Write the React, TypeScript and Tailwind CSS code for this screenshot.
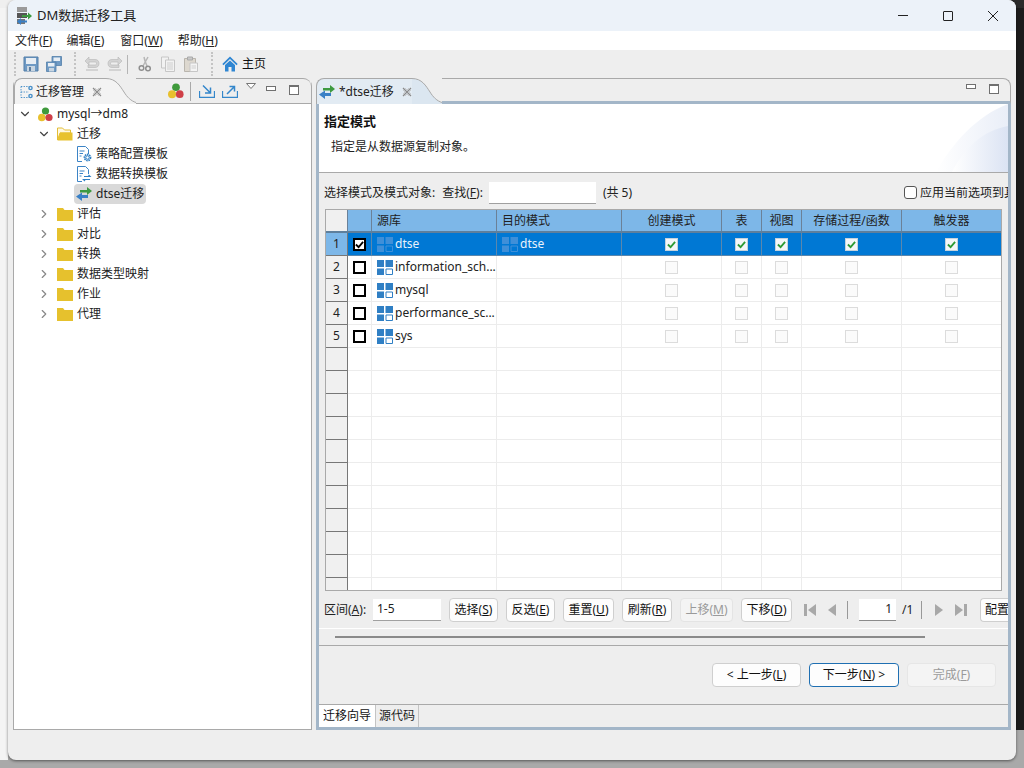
import React from 'react'
import { ChevronDown, ChevronRight } from 'lucide-react'

const FONT = 'font-["Noto_Sans","Noto_Sans_CJK_SC",sans-serif]'

function Floppy({ className = '' }: { className?: string }) {
  return (
    <svg viewBox="0 0 16 16" className={className}>
      <path d="M1 1h14v14H1z" fill="#6f9ac4" stroke="#527fa9" />
      <path d="M3 2h10v6H3z" fill="#e8eef4" />
      <path d="M4 10h8v5H4z" fill="#c9d6e2" />
      <path d="M6 11h2v4H6z" fill="#5b7d9f" />
    </svg>
  )
}

function SaveAll() {
  return (
    <svg viewBox="0 0 16 16" className="w-4 h-4">
      <path d="M6 .5h9.500v9H6z" fill="#6f9ac4" stroke="#527fa9" strokeWidth="0.8" />
      <path d="M7.500 1.500h6.500v3.500H7.500z" fill="#e8eef4" />
      <path d="M.5 6h9.500v9.500H.5z" fill="#6f9ac4" stroke="#527fa9" strokeWidth="0.8" />
      <path d="M2 7h6.500v3.500H2z" fill="#e8eef4" />
      <path d="M3 12h5v3.500H3z" fill="#c9d6e2" />
    </svg>
  )
}

function Undo({ flip = false }: { flip?: boolean }) {
  return (
    <svg viewBox="0 0 16 16" className={flip ? 'w-4 h-4 -scale-x-100' : 'w-4 h-4'}>
      <path d="M1 5l4-4v2.500h6c2.500 0 4 1.500 4 4s-1.500 4-4 4H4V9h7c1 0 1.500-.5 1.500-1.500S12 6 11 6H5v3z" fill="#d3d3d3" stroke="#b5b5b5" strokeWidth="0.6" />
      <path d="M2 13h12v2H2z" fill="#d3d3d3" />
    </svg>
  )
}

function Cut() {
  return (
    <svg viewBox="0 0 16 16" className="w-4 h-4">
      <path d="M11 1L6 10M7 1l1 4 2 5" fill="none" stroke="#b7b7b7" strokeWidth="1.500" />
      <circle cx="4.500" cy="12" r="2.300" fill="none" stroke="#8f8f8f" strokeWidth="1.500" />
      <circle cx="11" cy="12.500" r="2.300" fill="none" stroke="#8f8f8f" strokeWidth="1.500" />
    </svg>
  )
}

function Copy() {
  return (
    <svg viewBox="0 0 16 16" className="w-4 h-4">
      <path d="M1.500 1h7v11h-7z" fill="#f2f2f2" stroke="#c6c6c6" />
      <path d="M5.500 4h9v11.500h-9z" fill="#f2f2f2" stroke="#c6c6c6" />
      <path d="M7 7h6M7 9h6M7 11h6M7 13h6" stroke="#cfcfcf" />
    </svg>
  )
}

function Paste() {
  return (
    <svg viewBox="0 0 16 16" className="w-4 h-4">
      <path d="M1.500 2.500h11v13h-11z" fill="#ddd8cf" stroke="#b9b5ad" />
      <path d="M4.500 1h5v3h-5z" fill="#c9c9c9" stroke="#a9a9a9" />
      <path d="M7 7h7.500v8.500H7z" fill="#f4f4f4" stroke="#c6c6c6" />
      <path d="M8.500 10h4.500M8.500 12h4.500" stroke="#cfcfcf" />
    </svg>
  )
}

function Home() {
  return (
    <svg viewBox="0 0 16 16" className="w-4 h-4">
      <path d="M8 .5L.3 8l1.200 1.200L8 3l6.500 6.200L15.700 8z" fill="#2f86d2" />
      <path d="M3 9l5-4.600L13 9v6.500H9.500V11h-3v4.500H3z" fill="#2f86d2" />
    </svg>
  )
}

function Cluster({ size = 'w-[15px] h-[15px]' }: { size?: string }) {
  return (
    <svg viewBox="0 0 15 15" className={size}>
      <circle cx="7.500" cy="4" r="3.600" fill="#3f9a3c" />
      <circle cx="3.800" cy="10.500" r="3.800" fill="#e8c02e" />
      <circle cx="11" cy="10.500" r="3.600" fill="#cf3f47" />
    </svg>
  )
}

function Folder({ open = false }: { open?: boolean }) {
  if (open) {
    return (
      <svg viewBox="0 0 16 14" className="w-4 h-[14px]">
        <path d="M.5 13V1h5l2 2h6v3H3L.5 13z" fill="#fff8e0" stroke="#e3bd35" />
        <path d="M.5 13.500L3 5.500h12.500V13.500z" fill="#e8c22e" />
      </svg>
    )
  }
  return (
    <svg viewBox="0 0 16 14" className="w-4 h-[14px]">
      <path d="M0 1h6l1.500 2H16v11H0z" fill="#e6c12d" />
    </svg>
  )
}

function DocGear({ kind }: { kind: 'gear' | 'swap' }) {
  return (
    <svg viewBox="0 0 16 16" className="w-4 h-4">
      <path d="M1.500.5h8l3 3V8M6 15.500H1.500V.5" fill="none" stroke="#3c84c6" />
      <path d="M3.500 5h5M3.500 7.500h3.500M3.500 10h2" stroke="#3c84c6" />
      {kind === 'gear' ? (
        <g>
          <circle cx="11.500" cy="11.500" r="3" fill="none" stroke="#2f7fc4" strokeWidth="1.800" strokeDasharray="1.500 0.700" />
          <circle cx="11.500" cy="11.500" r="1.700" fill="none" stroke="#2f7fc4" />
        </g>
      ) : (
        <path d="M8 10.500h6l-1.500-1.500M14 13.500H7.500L9 15" fill="none" stroke="#2f7fc4" strokeWidth="1.200" />
      )}
    </svg>
  )
}

function Swap() {
  return (
    <svg viewBox="0 0 16 14" className="w-4 h-[14px] shrink-0">
      <path d="M4 3h7V0l5 4-5 4V5.500H4z" fill="#3d9a41" />
      <path d="M12 8H6V5.500L0 9.500l6 4.500v-3h6z" fill="#3a80c6" />
    </svg>
  )
}

function ViewDots() {
  return (
    <svg viewBox="0 0 14 14" className="w-[14px] h-[14px] shrink-0">
      <path d="M1 1.500h8M1 1.500v11M1 12.500h8M1 7h8" fill="none" stroke="#4a90c8" strokeDasharray="1.300 1.300" />
      <circle cx="10.500" cy="3" r="2.300" fill="#4a90c8" />
      <circle cx="10.500" cy="11" r="2.300" fill="#4a90c8" />
      <path d="M9.500 3h2M10.500 2v2M9.500 11h2M10.500 10v2" stroke="#fff" strokeWidth="0.700" />
    </svg>
  )
}

function CloseX() {
  return (
    <svg viewBox="0 0 10 10" className="w-[10px] h-[10px] shrink-0">
      <path d="M1 1l8 8M9 1l-8 8" stroke="#8a8a8a" strokeWidth="1.200" />
      <path d="M3 1l2 2 2-2M3 9l2-2 2 2M1 3l2 2-2 2M9 3L7 5l2 2" fill="none" stroke="#bdbdbd" strokeWidth="0.700" />
    </svg>
  )
}

function ImportIcon({ out = false }: { out?: boolean }) {
  return (
    <svg viewBox="0 0 16 14" className="w-4 h-[14px]">
      <path d="M.5 7v6.500h15V7" fill="none" stroke="#3487cb" strokeWidth="1.300" />
      {out ? (
        <path d="M5 10l7-7M7.500 2.500H12.500V7.500" fill="none" stroke="#3487cb" strokeWidth="1.500" />
      ) : (
        <path d="M4 1.500l7 7M11.500 3.500v5.500H6" fill="none" stroke="#3487cb" strokeWidth="1.500" />
      )}
    </svg>
  )
}

function MinMax() {
  return (
    <div className="flex items-center gap-[13px]">
      <div className="w-[10px] h-[5px] border border-[#707070] bg-white mb-[4px]" />
      <div className="w-[10px] h-[10px] border border-[#707070] border-t-[2px] bg-white" />
    </div>
  )
}

function SchemaIcon({ dim = false }: { dim?: boolean }) {
  const c = dim ? '#3f8fd8' : '#2f7fc4'
  return (
    <svg viewBox="0 0 16 15" className="w-4 h-[15px] shrink-0">
      <path d="M0 0h7v7H0zM8.500 0H16v7H8.500zM0 8.500h7V15H0z" fill={c} />
      <path d="M9 9h6.500v5.500H9z" fill="none" stroke={c} />
    </svg>
  )
}

function Grip() {
  return <div className="w-[2px] h-[24px] mx-[2px] border-l-2 border-dotted border-[#c4c4c4]" />
}

function Sep() {
  return <div className="w-px h-[19px] bg-[#b5b5b5] mx-1" />
}

function Check({ on, black }: { on: boolean; black?: boolean }) {
  if (black) {
    return (
      <div className="w-[13px] h-[13px] border-2 border-black bg-white flex items-center justify-center">
        {on && (
          <svg viewBox="0 0 10 10" className="w-[9px] h-[9px]">
            <path d="M1 5l3 3 5-6" fill="none" stroke="#000" strokeWidth="2" />
          </svg>
        )}
      </div>
    )
  }
  return (
    <div className={on ? 'w-[13px] h-[13px] border border-[#c5d2dc] bg-[#f4f6f8] flex items-center justify-center' : 'w-[13px] h-[13px] border border-[#dcdcdc] bg-[#fbfbfb]'}>
      {on && (
        <svg viewBox="0 0 10 10" className="w-[9px] h-[9px]">
          <path d="M1 5l3 3 5-6" fill="none" stroke="#2e9a36" strokeWidth="2" />
        </svg>
      )}
    </div>
  )
}

function TreeRow({ indent, arrow, icon, label, selected }: { indent: string; arrow?: 'open' | 'closed'; icon: React.ReactNode; label: string; selected?: boolean }) {
  return (
    <div className={`h-5 flex items-center ${indent}`}>
      <div className="w-[18px] flex items-center">
        {arrow === 'open' && <ChevronDown size={14} className="text-[#444]" />}
        {arrow === 'closed' && <ChevronRight size={14} className="text-[#888]" />}
      </div>
      <div className={selected ? 'flex items-center h-5 bg-[#d9d9d9] rounded-sm px-[2px] gap-[3px]' : 'flex items-center gap-[3px] px-[2px]'}>
        {icon}
        <span className="ml-[1px] text-[#222]">{label}</span>
      </div>
    </div>
  )
}

function Btn({ children, w, disabled }: { children: React.ReactNode; w: string; disabled?: boolean }) {
  return (
    <div className={`${w} h-6 shrink-0 rounded-[4px] border flex items-center justify-center ${disabled ? 'border-[#e4e4e4] bg-[#f4f4f4] text-[#9a9a9a]' : 'border-[#cfcfcf] bg-[#fdfdfd] text-[#111]'}`}>
      {children}
    </div>
  )
}

function Key({ c }: { c: string }) {
  return <span className="underline">{c}</span>
}

const colW = ['w-[22px]', 'w-[24px]', 'w-[125px]', 'w-[125px]', 'w-[100px]', 'w-[40px]', 'w-[40px]', 'w-[100px]', 'w-[100px]']
const headers = ['', '', '源库', '目的模式', '创建模式', '表', '视图', '存储过程/函数', '触发器']
const schemas = ['dtse', 'information_sch...', 'mysql', 'performance_sc...', 'sys']
const emptyRows = Array.from({ length: 11 }, (_, i) => i)

function Row({ n }: { n: number }) {
  const sel = n === 0
  const name = schemas[n]
  const cell = sel ? 'border-r border-b border-[#5b87ad]' : 'border-r border-b border-[#ececec]'
  return (
    <div className={`flex h-[23px] ${sel ? 'bg-[#0078d4] text-[#e8f2fb]' : 'bg-white text-[#222]'}`}>
      <div className={`${colW[0]} shrink-0 flex items-center justify-center border-r border-b border-[#777] ${sel ? 'bg-[#7db7e8] text-[#222]' : 'bg-[#f0f0f0] text-[#222]'}`}>
        {name ? n + 1 : ''}
      </div>
      <div className={`${colW[1]} shrink-0 flex items-center justify-center ${cell}`}>
        {name && <Check on={sel} black />}
      </div>
      <div className={`${colW[2]} shrink-0 flex items-center gap-[1px] pl-[5px] overflow-hidden whitespace-nowrap ${cell}`}>
        {name && <SchemaIcon dim={sel} />}
        <span className="ml-[1px]">{name}</span>
      </div>
      <div className={`${colW[3]} shrink-0 flex items-center gap-[1px] pl-[5px] ${cell}`}>
        {sel && <SchemaIcon dim />}
        {sel && <span className="ml-[1px]">dtse</span>}
      </div>
      {[4, 5, 6, 7, 8].map((c) => (
        <div key={c} className={`${colW[c]} shrink-0 flex items-center justify-center ${cell}`}>
          {name && <Check on={sel} />}
        </div>
      ))}
      <div className="flex-1 bg-white border-b border-[#ececec]" />
    </div>
  )
}

export default function App() {
  return (
    <div className={`${FONT} relative w-[1024px] h-[768px] overflow-hidden text-[12px] leading-none bg-[#a9a9a9]`}>
      <div className="absolute left-0 top-0 w-[8px] h-[760px] bg-[#f4f4f4]" />
      <div className="absolute right-0 top-0 w-[8px] h-[730px] bg-[#1c1c1c]" />
      <div className="absolute left-[340px] right-0 top-0 h-[8px] bg-[#2a2a2a]" />
      <div className="absolute left-0 right-[340px] top-0 h-[8px] bg-[#efefef]" />

      <div className="absolute left-[8px] top-0 w-[1008px] h-[760px] rounded-lg bg-[#eeeeee] flex flex-col overflow-hidden shadow-[0_1px_3px_rgba(0,0,0,0.5)]">
        {/* title bar */}
        <div className="h-[31px] shrink-0 bg-[#ecf2f9] flex items-center pl-[8px]">
          <svg viewBox="0 0 16 18" className="w-4 h-[18px]">
            <path d="M1 0h10v5H1z" fill="#9a9a9a" />
            <path d="M1 6h10v5H1z" fill="#555" />
            <path d="M1 12h8v5H1z" fill="#777" />
            <path d="M6 8h6V5.500l4 3.500-4 3.500V10H6z" fill="#3d9a41" />
            <path d="M11 15.500H5V18l-4-3.500L5 11v2.500h6z" fill="#3a80c6" />
          </svg>
          <span className="ml-[5px] text-[13px] text-[#222]">DM数据迁移工具</span>
          <div className="ml-auto flex items-center gap-[35px] pr-[18px]">
            <div className="w-[10px] h-px bg-[#222]" />
            <div className="w-[10px] h-[10px] border border-[#222] rounded-[1px]" />
            <svg viewBox="0 0 10 10" className="w-[10px] h-[10px]">
              <path d="M0 0l10 10M10 0L0 10" stroke="#222" />
            </svg>
          </div>
        </div>

        {/* menu */}
        <div className="h-[19px] shrink-0 bg-white flex items-center pl-[7px] gap-[14px] text-[#222]">
          <span>文件(<Key c="F" />)</span>
          <span>编辑(<Key c="E" />)</span>
          <span className="ml-[2px]">窗口(<Key c="W" />)</span>
          <span className="ml-[1px]">帮助(<Key c="H" />)</span>
        </div>

        {/* toolbar */}
        <div className="h-[28px] shrink-0 flex items-center pl-[4px]">
          <Grip />
          <div className="flex items-center gap-[7px] ml-[5px]">
            <Floppy className="w-4 h-4" />
            <SaveAll />
          </div>
          <div className="ml-[10px]"><Grip /></div>
          <div className="flex items-center gap-[7px] ml-[6px]">
            <Undo />
            <Undo flip />
          </div>
          <Sep />
          <div className="flex items-center gap-[7px] ml-[5px]">
            <Cut />
            <Copy />
            <Paste />
          </div>
          <div className="ml-[10px]"><Grip /></div>
          <div className="ml-[7px] flex items-center gap-[4px] text-[#111]">
            <Home />
            <span>主页</span>
          </div>
        </div>

        {/* panels */}
        <div className="flex-1 min-h-0 flex gap-[4px] pl-[5px] pr-[5px]">
          {/* left */}
          <div className="w-[299px] flex flex-col border border-[#a9a9a9] rounded-t-lg border-t-0 bg-white">
            <div className="relative h-[26px] shrink-0 flex items-center bg-[#eeeeee]">
              <div className="relative flex items-center h-[26px] w-[92px] pl-[5px] gap-[2px] bg-[#f3f3f3] rounded-tl-lg border-t border-l border-[#a9a9a9] text-[#222] whitespace-nowrap">
                <ViewDots />
                <span>迁移管理</span>
                <span className="ml-[6px]"><CloseX /></span>
              </div>
              <svg viewBox="0 0 30 26" className="w-[30px] h-[26px] shrink-0" preserveAspectRatio="none">
                <path d="M0 .5C10 .5 14 8 18 14c3 5 7 9 12 10.500V26H0z" fill="#f3f3f3" />
                <path d="M0 .5C10 .5 14 8 18 14c3 5 7 9 12 10.500" fill="none" stroke="#a9a9a9" />
              </svg>
              <div className="flex-1 h-[26px] border-t border-b border-[#a9a9a9] rounded-tr-lg flex items-center justify-end pr-[12px]">
                <Cluster size="w-[16px] h-[16px]" />
                <div className="w-px h-[19px] bg-[#a9a9a9] ml-[6px] mr-[8px]" />
                <ImportIcon />
                <span className="ml-[7px]"><ImportIcon out /></span>
                <svg viewBox="0 0 10 6" className="w-[10px] h-[6px] ml-[8px] mb-[10px]">
                  <path d="M.5.5h9L5 5.500z" fill="#fff" stroke="#777" />
                </svg>
                <span className="ml-[10px] mb-[2px]"><MinMax /></span>
              </div>
            </div>
            <div className="flex-1 flex flex-col px-[3px] bg-white">
              <TreeRow indent="pl-[1px]" arrow="open" icon={<Cluster />} label="mysql→dm8" />
              <TreeRow indent="pl-[20px]" arrow="open" icon={<Folder open />} label="迁移" />
              <TreeRow indent="pl-[39px]" icon={<DocGear kind="gear" />} label="策略配置模板" />
              <TreeRow indent="pl-[39px]" icon={<DocGear kind="swap" />} label="数据转换模板" />
              <TreeRow indent="pl-[39px]" icon={<Swap />} label="dtse迁移" selected />
              {['评估', '对比', '转换', '数据类型映射', '作业', '代理'].map((t) => (
                <TreeRow key={t} indent="pl-[20px]" arrow="closed" icon={<Folder />} label={t} />
              ))}
            </div>
          </div>

          {/* right */}
          <div className="w-[695px] flex flex-col">
            <div className="relative h-[26px] shrink-0 flex items-center">
              <div className="flex items-center h-[26px] w-[96px] shrink-0 pl-[2px] gap-[4px] bg-[#e2ebf3] rounded-tl-lg border-t border-l border-[#a9a9a9] text-[#222] whitespace-nowrap">
                <Swap />
                <span>*dtse迁移</span>
                <span className="ml-[4px]"><CloseX /></span>
              </div>
              <svg viewBox="0 0 30 26" className="w-[30px] h-[26px] shrink-0" preserveAspectRatio="none">
                <path d="M0 .5C10 .5 14 8 18 14c3 5 7 9 12 10.500V26H0z" fill="#dbe6f0" />
                <path d="M0 .5C10 .5 14 8 18 14c3 5 7 9 12 10.500" fill="none" stroke="#a9a9a9" />
              </svg>
              <div className="flex-1 h-[26px] border-t border-r border-b-[3px] border-b-[#a3b6c8] border-t-[#a9a9a9] border-r-[#a9a9a9] rounded-tr-lg flex items-center justify-end pr-[11px]">
                <span className="mb-[3px]"><MinMax /></span>
              </div>
            </div>
            <div className="flex-1 min-h-0 flex flex-col border-x-[3px] border-b-[3px] border-[#a3b6c8] overflow-hidden">
              {/* wizard head */}
              <div className="relative h-[69px] shrink-0 bg-white border-b border-[#a9a9a9] pl-[5px] overflow-hidden">
                <div className="text-[13px] font-bold text-[#111] mt-[11px]">指定模式</div>
                <div className="mt-[13px] pl-[7px] text-[#222]">指定是从数据源复制对象。</div>
                <svg viewBox="0 0 72 68" className="absolute right-0 top-0 w-[72px] h-[68px]">
                  <defs>
                    <linearGradient id="wz" x1="0" y1="0" x2="1" y2="0">
                      <stop offset="0" stopColor="#ffffff" />
                      <stop offset="1" stopColor="#dbe3f3" />
                    </linearGradient>
                  </defs>
                  <path d="M0 68C16 40 40 12 72 0v68z" fill="url(#wz)" opacity="0.6" />
                  <path d="M16 68C28 44 48 26 72 22v46z" fill="url(#wz)" />
                </svg>
              </div>

              {/* filter */}
              <div className="h-[36px] shrink-0 flex items-center pl-[5px] pt-[3px] text-[#222] whitespace-nowrap overflow-hidden">
                <span>选择模式及模式对象:</span>
                <span className="ml-[7px]">查找(<Key c="F" />):</span>
                <div className="ml-[6px] w-[107px] h-[22px] bg-white border-b border-[#a0a0a0]" />
                <span className="ml-[7px]">(共 5)</span>
                <div className="ml-auto flex items-center">
                  <div className="w-[13px] h-[13px] rounded-[3px] border border-[#555] bg-white" />
                  <span className="ml-[3px] w-[88px] overflow-hidden">应用当前选项到其</span>
                </div>
              </div>

              {/* table */}
              <div className="mx-[6px] h-[382px] shrink-0 border border-[#a9a9a9] bg-white overflow-hidden">
                <div className="flex h-[23px] border-b-[2px] border-[#5e7f9c] text-[#222]">
                  {headers.map((t, i) => (
                    <div
                      key={i}
                      className={`${colW[i]} shrink-0 flex items-center border-r border-[#6b8198] ${i === 0 ? 'bg-[#f0f0f0]' : 'bg-[#7db7e8]'} ${i === 2 || i === 3 ? 'pl-[5px]' : 'justify-center'}`}
                    >
                      {t}
                    </div>
                  ))}
                  <div className="flex-1 bg-[#f0f0f0]" />
                </div>
                {[0, 1, 2, 3, 4].map((n) => (
                  <Row key={n} n={n} />
                ))}
                {emptyRows.map((i) => (
                  <Row key={i} n={i + 5} />
                ))}
              </div>

              {/* pager */}
              <div className="h-[38px] shrink-0 flex items-center pl-[5px] gap-[8px] text-[#222] whitespace-nowrap overflow-hidden border-b border-white">
                <span className="w-[43px] shrink-0">区间(<Key c="A" />):</span>
                <div className="-ml-[2px] w-[68px] h-[22px] shrink-0 bg-white border-b border-[#a0a0a0] flex items-center pl-[4px]">1-5</div>
                <Btn w="w-[49px]">选择(<Key c="S" />)</Btn>
                <Btn w="w-[49px]">反选(<Key c="E" />)</Btn>
                <Btn w="w-[51px]">重置(<Key c="U" />)</Btn>
                <Btn w="w-[50px]">刷新(<Key c="R" />)</Btn>
                <Btn w="w-[53px]" disabled>上移(<Key c="M" />)</Btn>
                <Btn w="w-[51px]">下移(<Key c="D" />)</Btn>
                <div className="flex items-center shrink-0 ml-[4px]">
                  <svg viewBox="0 0 12 12" className="w-3 h-3 shrink-0"><path d="M0 0h3v12H0zM12 0v12L4 6z" fill="#a8a8a8" /></svg>
                  <svg viewBox="0 0 8 12" className="w-2 h-3 ml-[12px] shrink-0"><path d="M8 0v12L0 6z" fill="#a8a8a8" /></svg>
                  <div className="w-px h-[18px] bg-[#999] ml-[11px]" />
                  <div className="ml-[11px] w-[37px] h-[22px] bg-white border-b border-[#8a8a8a] flex items-center justify-end pr-[4px]">1</div>
                  <span className="ml-[6px] w-[11px]">/1</span>
                  <div className="w-px h-[18px] bg-[#999] ml-[8px]" />
                  <svg viewBox="0 0 8 12" className="w-2 h-3 ml-[13px] shrink-0"><path d="M0 0v12l8-6z" fill="#a8a8a8" /></svg>
                  <svg viewBox="0 0 12 12" className="w-3 h-3 ml-[12px] shrink-0"><path d="M9 0h3v12H9zM0 0v12l8-6z" fill="#a8a8a8" /></svg>
                  <div className="ml-[13px] w-[40px] h-6 shrink-0 rounded-l-[4px] border border-r-0 border-[#cfcfcf] bg-[#fdfdfd] flex items-center pl-[4px] text-[#111] overflow-hidden">配置</div>
                </div>
              </div>

              {/* scroll */}
              <div className="h-[17px] shrink-0 border-b border-[#a9a9a9] flex items-center pl-[16px]">
                <div className="w-[590px] h-[2px] bg-[#8a8a8a]" />
              </div>

              {/* nav buttons */}
              <div className="flex-1 min-h-0 flex items-center justify-end pr-[12px] gap-[8px] border-b border-[#a9a9a9] text-[#111]">
                <div className="w-[89px] h-6 rounded-[4px] border border-[#cfcfcf] bg-[#fdfdfd] flex items-center justify-center">&lt; 上一步(<Key c="L" />)</div>
                <div className="w-[90px] h-6 rounded-[4px] border border-[#1f6fb2] bg-[#fdfdfd] flex items-center justify-center">下一步(<Key c="N" />) &gt;</div>
                <div className="w-[89px] h-6 rounded-[4px] border border-[#e6e6e6] bg-[#f4f4f4] text-[#9a9a9a] flex items-center justify-center">完成(<Key c="F" />)</div>
              </div>

              {/* bottom tabs */}
              <div className="h-[22px] shrink-0 flex items-stretch">
                <div className="w-[56px] bg-white flex items-center justify-center text-[#111]">迁移向导</div>
                <div className="w-[44px] flex items-center justify-center text-[#222] border-x border-[#c4c4c4]">源代码</div>
              </div>
            </div>
          </div>
        </div>

        {/* status */}
        <div className="h-[30px] shrink-0" />
      </div>
    </div>
  )
}
